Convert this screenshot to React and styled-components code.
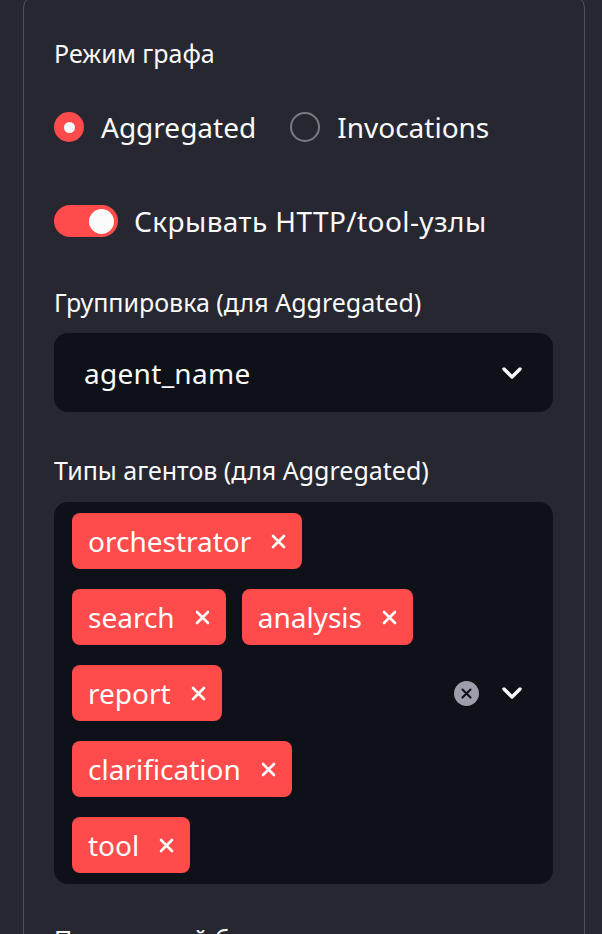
import React from 'react';
import styled, { createGlobalStyle } from 'styled-components';

const GlobalStyle = createGlobalStyle`
  html, body {
    margin: 0;
    padding: 0;
    background: #262730;
    font-family: "Noto Sans", "Open Sans", sans-serif;
    color: #fafafa;
    overflow: hidden;
  }
`;

const Page = styled.div`
  width: 602px;
  height: 934px;
  padding: 0 17px 0 23px;
  box-sizing: border-box;
  overflow: hidden;
`;

const Card = styled.div`
  margin-top: -6px;
  border: 1px solid rgba(250, 250, 250, 0.2);
  border-radius: 14px;
  padding: 42px 31px 40px 30px;
  display: flex;
  flex-direction: column;
`;

const Label = styled.div`
  font-size: 25px;
  line-height: 32px;
  color: #fafafa;
  margin-top: ${(p) => p.$mt || 0}px;
  white-space: nowrap;
`;

const RadioRow = styled.div`
  display: flex;
  align-items: center;
  height: 36px;
  margin-top: 40px;
  gap: 34px;
`;

const RadioItem = styled.div`
  display: flex;
  align-items: center;
  gap: 17px;
  font-size: 28px;
`;

const RadioDot = styled.span`
  width: 30px;
  height: 30px;
  border-radius: 50%;
  box-sizing: border-box;
  display: flex;
  align-items: center;
  justify-content: center;
  background: ${(p) => (p.$checked ? '#ff4b4b' : 'transparent')};
  border: ${(p) => (p.$checked ? 'none' : '2px solid rgba(250, 250, 250, 0.4)')};

  &::after {
    content: '';
    display: ${(p) => (p.$checked ? 'block' : 'none')};
    width: 11px;
    height: 11px;
    border-radius: 50%;
    background: #fafafa;
  }
`;

const ToggleRow = styled.div`
  display: flex;
  align-items: center;
  gap: 16px;
  height: 36px;
  margin-top: 58px;
  font-size: 28px;
  letter-spacing: 0.4px;
`;

const Track = styled.span`
  width: 64px;
  height: 32px;
  border-radius: 16px;
  background: #ff4b4b;
  display: flex;
  align-items: center;
  justify-content: flex-end;
  padding: 0 4px;
  box-sizing: border-box;
`;

const Knob = styled.span`
  width: 25px;
  height: 25px;
  border-radius: 50%;
  background: #fafafa;
`;

const SelectBox = styled.div`
  margin-top: 15px;
  height: 79px;
  border-radius: 14px;
  background: #0e1117;
  display: flex;
  align-items: center;
  justify-content: space-between;
  padding: 0 30px 0 30px;
  font-size: 28px;
  letter-spacing: 0.3px;
`;

const MultiBox = styled.div`
  margin-top: 16px;
  border-radius: 14px;
  background: #0e1117;
  display: flex;
  align-items: center;
  padding: 11px 30px 11px 18px;
`;

const TagArea = styled.div`
  flex: 1;
  display: flex;
  flex-direction: column;
  gap: 20px;
`;

const TagRow = styled.div`
  display: flex;
  gap: 16px;
`;

const Tag = styled.span`
  display: inline-flex;
  align-items: center;
  height: 56px;
  padding: 0 16px;
  gap: 20px;
  border-radius: 8px;
  background: #ff4b4b;
  color: #fff;
  font-size: 28px;
`;

const Controls = styled.div`
  display: flex;
  align-items: center;
  gap: 22px;
`;

const ClearBtn = styled.span`
  width: 25px;
  height: 25px;
  border-radius: 50%;
  background: #9c9eab;
  display: flex;
  align-items: center;
  justify-content: center;
`;

const Chevron = () => (
  <svg width="22" height="14" viewBox="0 0 22 14">
    <path d="M3 3 L11 11 L19 3" fill="none" stroke="#fafafa" strokeWidth="3.4" strokeLinecap="round" strokeLinejoin="round" />
  </svg>
);

const Cross = ({ size = 15, color = '#fff', w = 2.6 }) => (
  <svg width={size} height={size} viewBox="0 0 15 15">
    <path d="M2 2 L13 13 M13 2 L2 13" stroke={color} strokeWidth={w} strokeLinecap="round" />
  </svg>
);

const tagRows = [
  ['orchestrator'],
  ['search', 'analysis'],
  ['report'],
  ['clarification'],
  ['tool'],
];

export default function App() {
  return (
    <>
      <GlobalStyle />
      <Page>
        <Card>
          <Label>Режим графа</Label>
          <RadioRow>
            <RadioItem>
              <RadioDot $checked />
              Aggregated
            </RadioItem>
            <RadioItem>
              <RadioDot />
              Invocations
            </RadioItem>
          </RadioRow>

          <ToggleRow>
            <Track>
              <Knob />
            </Track>
            Скрывать HTTP/tool-узлы
          </ToggleRow>

          <Label $mt={47}>Группировка (для Aggregated)</Label>
          <SelectBox>
            agent_name
            <Chevron />
          </SelectBox>

          <Label $mt={42}>Типы агентов (для Aggregated)</Label>
          <MultiBox>
            <TagArea>
              {tagRows.map((row, i) => (
                <TagRow key={i}>
                  {row.map((t) => (
                    <Tag key={t}>
                      {t}
                      <Cross />
                    </Tag>
                  ))}
                </TagRow>
              ))}
            </TagArea>
            <Controls>
              <ClearBtn>
                <Cross size={11} color="#0e1117" w={2.8} />
              </ClearBtn>
              <Chevron />
            </Controls>
          </MultiBox>

          <Label $mt={39}>Предельный бюджет узлов</Label>
        </Card>
      </Page>
    </>
  );
}
